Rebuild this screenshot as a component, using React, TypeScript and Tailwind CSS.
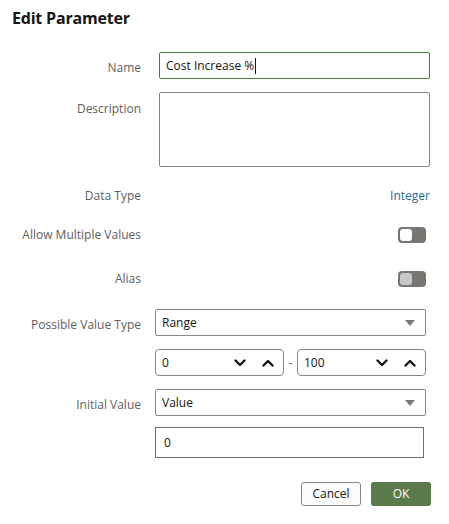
import React from "react";

function Chevron({ up }: { up?: boolean }) {
  return (
    <svg width="12" height="8" viewBox="0 0 12 8" className="shrink-0">
      <polyline
        points={up ? "1.5,6.5 6,2 10.5,6.5" : "1.5,1.5 6,6 10.5,1.5"}
        fill="none"
        stroke="#161513"
        strokeWidth="2.4"
        strokeLinecap="round"
        strokeLinejoin="round"
      />
    </svg>
  );
}

function Caret() {
  return (
    <svg width="10" height="6" viewBox="0 0 10 6" className="shrink-0">
      <polygon points="0,0 10,0 5,6" fill="#7a7a7a" />
    </svg>
  );
}

function Label({ children, top, low }: { children: React.ReactNode; top?: boolean; low?: boolean }) {
  return (
    <div
      className={`w-[129px] shrink-0 text-right text-[12px] text-[#5e5e5e] ${
        top ? "self-start pt-[8px]" : low ? "pt-[4px]" : ""
      }`}
    >
      {children}
    </div>
  );
}

function Toggle({ disabled }: { disabled?: boolean }) {
  return (
    <div className="w-[28px] h-[16px] rounded-[4px] bg-[#7b7571] flex items-center px-[2px]">
      <div
        className={`w-[12px] h-[12px] rounded-[3px] ${disabled ? "bg-[#c8c8c8]" : "bg-white"}`}
      />
    </div>
  );
}

function NumberBox({ value }: { value: string }) {
  return (
    <div className="w-[129px] h-[27px] border border-[#8a8580] rounded-[4px] bg-white flex items-center pl-[6px] pr-[9px] text-[12px] text-[#161513]">
      <span className="flex-1">{value}</span>
      <div className="flex items-center gap-[16px]">
        <Chevron />
        <Chevron up />
      </div>
    </div>
  );
}

export default function App() {
  return (
    <div
      className="w-[449px] h-[524px] bg-white relative"
      style={{ fontFamily: '"Open Sans", "Noto Sans", sans-serif' }}
    >
      <div className="pl-[12px] pr-[19px]">
        <div className="pt-[6px] h-[30px] text-[16px] leading-[24px] font-bold text-[#161513] tracking-[-0.2px]">
          Edit Parameter
        </div>

        {/* Name */}
        <div className="mt-[22px] flex items-center gap-[14px] h-[27px]">
          <Label low>Name</Label>
          <div className="flex-1 pl-[4px]">
            <div className="h-[27px] border border-[#4d7a3a] rounded-[2px] flex items-center px-[6px] text-[12px] text-[#161513]">
              Cost Increase %<span className="inline-block w-[1px] h-[16px] bg-[#161513] ml-[1px]" />
            </div>
          </div>
        </div>

        {/* Description */}
        <div className="mt-[13px] flex gap-[14px] h-[75px]">
          <Label top>Description</Label>
          <div className="flex-1 pl-[4px]">
            <div className="h-[75px] border border-[#8a8580] rounded-[2px]" />
          </div>
        </div>

        {/* Data Type */}
        <div className="mt-[19px] flex items-center gap-[14px] h-[20px]">
          <Label>Data Type</Label>
          <div className="flex-1 text-right text-[12px] text-[#1d6d93]">Integer</div>
        </div>

        {/* Allow Multiple Values */}
        <div className="mt-[19px] flex items-center gap-[14px] h-[20px]">
          <Label>Allow Multiple Values</Label>
          <div className="flex-1 flex justify-end pr-[4px]">
            <Toggle />
          </div>
        </div>

        {/* Alias */}
        <div className="mt-[24px] flex items-center gap-[14px] h-[20px]">
          <Label>Alias</Label>
          <div className="flex-1 flex justify-end pr-[4px]">
            <Toggle disabled />
          </div>
        </div>

        {/* Possible Value Type */}
        <div className="mt-[20px] flex items-center gap-[14px] h-[27px]">
          <Label low>Possible Value Type</Label>
          <div className="flex-1 pr-[4px]">
            <div className="h-[27px] border border-[#8a8580] rounded-[2px] flex items-center pl-[6px] pr-[10px] text-[12px] text-[#161513]">
              <span className="flex-1">Range</span>
              <Caret />
            </div>
          </div>
        </div>

        {/* Range */}
        <div className="mt-[13px] flex items-center gap-[14px] h-[27px]">
          <div className="w-[129px] shrink-0" />
          <div className="flex-1 pr-[5px] flex items-center">
            <NumberBox value="0" />
            <span className="w-[13px] text-center text-[12px] text-[#5e5e5e]">-</span>
            <NumberBox value="100" />
          </div>
        </div>

        {/* Initial Value */}
        <div className="mt-[13px] flex items-center gap-[14px] h-[27px]">
          <Label low>Initial Value</Label>
          <div className="flex-1 pr-[4px]">
            <div className="h-[27px] border border-[#8a8580] rounded-[2px] flex items-center pl-[6px] pr-[10px] text-[12px] text-[#161513]">
              <span className="flex-1">Value</span>
              <Caret />
            </div>
          </div>
        </div>

        {/* Initial value input */}
        <div className="mt-[11px] flex items-center gap-[14px] h-[31px]">
          <div className="w-[129px] shrink-0" />
          <div className="flex-1 pr-[6px]">
            <div className="h-[31px] border border-[#6f6f6f] flex items-center px-[8px] text-[12px] text-[#161513]">
              0
            </div>
          </div>
        </div>

        {/* Buttons */}
        <div className="mt-[24px] flex justify-end gap-[10px] pr-0 mr-[-1px]">
          <button className="w-[60px] h-[24px] border border-[#8a8580] rounded-[3px] bg-[#fcfcfc] text-[12px] text-[#161513]">
            Cancel
          </button>
          <button className="w-[60px] h-[24px] rounded-[3px] bg-[#5a7a4a] text-[12px] text-white">
            OK
          </button>
        </div>
      </div>
    </div>
  );
}
